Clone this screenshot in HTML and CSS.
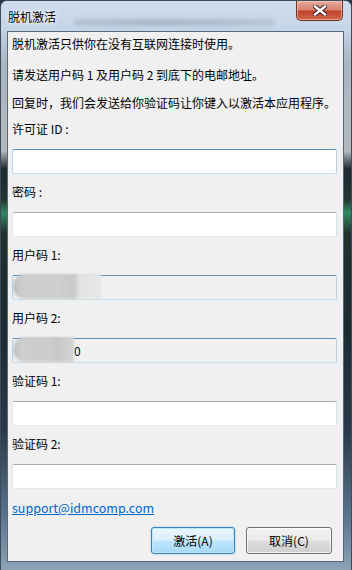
FILE: index.html
```html
<html>
<head>
<meta charset="utf-8">
<link rel="stylesheet" href="styles.css">
</head>
<body>

<div class="window">
	<!--start title bar-->
	<div class="titleBar">
		<span class="titleText">脱机激活</span>
		<span class="titleBlur"></span>
		<div class="closeBtn">
			<svg width="14" height="11" viewBox="0 0 14 11">
				<path d="M2 1.5 L12 9.5 M12 1.5 L2 9.5" stroke="#3b2320" stroke-width="4.4" stroke-linecap="square" fill="none"/>
				<path d="M2 1.5 L12 9.5 M12 1.5 L2 9.5" stroke="#ffffff" stroke-width="2.4" stroke-linecap="square" fill="none"/>
			</svg>
		</div>
	</div>
	<!--end title bar-->

	<div class="client">
		<p class="line first">脱机激活只供你在没有互联网连接时使用。</p>
		<p class="line second">请发送用户码 1 及用户码 2 到底下的电邮地址。</p>
		<p class="line third">回复时，我们会发送给你验证码让你键入以激活本应用程序。</p>

		<div class="label">许可证 ID :</div>
		<input class="box boxBlue" type="text">

		<div class="label">密码 :</div>
		<input class="box" type="password">

		<div class="label">用户码 1:</div>
		<div class="box boxBlue readOnly">
			<span class="blob blobLong"></span>
		</div>

		<div class="label">用户码 2:</div>
		<div class="box boxBlue readOnly">
			<span class="blob blobShort"></span><span class="tail">0</span>
		</div>

		<div class="label">验证码 1:</div>
		<input class="box" type="text">

		<div class="label">验证码 2:</div>
		<input class="box" type="text">

		<a class="mail" href="#">support@idmcomp.com</a>

		<div class="buttons">
			<button class="btn btnDefault">激活(A)</button>
			<button class="btn">取消(C)</button>
		</div>
	</div>
</div>

</body>
</html>
```

FILE: styles.css
```css
html, body {
	margin: 0;
	padding: 0;
	background-color: #2b3640;
	font-family: "Noto Sans CJK SC", "Noto Sans", sans-serif;
	font-size: 12px;
	color: #000;
}

.window {
	width: 352px;
	height: 570px;
	box-sizing: border-box;
	border-radius: 7px 7px 0 0;
	border: 1px solid #3e4c59;
	border-bottom: none;
	background: linear-gradient(to bottom,
		#c6d6e8 0, #c3d3e4 30px, #aab6c2 60px, #b3b8bc 150px,
		#1f2a31 168px, #24332f 198px, #2f8a5f 212px, #22302d 232px,
		#1e2a31 330px, #2a3a48 430px, #55708a 510px, #8ea3b8 570px);
	display: flex;
	flex-direction: column;
}

.titleBar {
	height: 30px;
	display: flex;
	align-items: flex-start;
	background: linear-gradient(to bottom, #cfdded, #c4d5e8);
	border-radius: 6px 6px 0 0;
}

.titleText {
	margin: 8px 0 0 7px;
	line-height: 16px;
	text-shadow: 0 0 6px #fff, 0 0 3px #fff;
}

.titleBlur {
	width: 200px;
	height: 5px;
	margin: 19px 0 0 18px;
	background: linear-gradient(to right, #a4b1bf, #8f9cab 40%, #97a4b3 70%, #aab6c3);
	filter: blur(2.5px);
	opacity: 0.75;
}

.closeBtn {
	margin-left: auto;
	margin-right: 8px;
	width: 47px;
	height: 20px;
	box-sizing: border-box;
	border: 1px solid #6a3128;
	border-top: none;
	border-radius: 0 0 5px 5px;
	background: linear-gradient(to bottom, #e6aa9c 0, #d8826f 45%, #c3442c 55%, #cd6648 100%);
	box-shadow: inset 0 0 0 1px rgba(255, 220, 210, 0.5);
	display: flex;
	align-items: center;
	justify-content: center;
}

.client {
	margin: 0 7px 8px 6px;
	flex: 1;
	background-color: #f0f0f0;
	border: 1px solid #56687a;
	padding: 2px 6px 0 4px;
	display: flex;
	flex-direction: column;
}

.line {
	margin: 0;
	line-height: 20px;
	white-space: nowrap;
}

.second {
	margin-top: 11px;
}

.third {
	margin-top: 8px;
}

.label {
	line-height: 20px;
	margin-top: 8px;
}

.third + .label {
	margin-top: 6px;
}

.box {
	display: block;
	height: 25px;
	box-sizing: border-box;
	margin: 10px 0 0 0;
	padding: 0 3px;
	width: 100%;
	background-color: #fff;
	border: 1px solid #e3e9ef;
	border-top-color: #abadb3;
	border-left-color: #e2e3ea;
	border-right-color: #dbdfe6;
	border-radius: 2px;
	font-family: inherit;
	font-size: 12px;
	outline: none;
}

.boxBlue {
	border-color: #b7d3ea;
	border-top-color: #5b8db9;
	border-bottom-color: #c6e0f2;
}

.readOnly {
	background-color: #f0f0f0;
	display: flex;
	align-items: center;
	padding: 0;
}

.blob {
	display: block;
	height: 25px;
	filter: blur(0.8px);
	border-radius: 12px 0 0 12px;
}

.blobLong {
	width: 88px;
	margin-top: -3px;
	background: linear-gradient(to right, #bdbdbd 0, #cdcdcd 10%, #cfd0d0 50%, #c8c9c9 70%, #e3e4e4 76%, #e6e7e7 100%);
}

.blobShort {
	width: 61px;
	margin-top: -3px;
	background: linear-gradient(to right, #c2c2c2 0, #cecece 15%, #cdcdcd 60%, #c7c7c7 75%, #d6d6d6 100%);
}

.tail {
	margin-left: 0;
	line-height: 20px;
}

.mail {
	margin-top: 9px;
	line-height: 20px;
	color: #0066cc;
	text-decoration: underline;
	font-size: 12.5px;
	align-self: flex-start;
}

.buttons {
	margin-top: 9px;
	display: flex;
	justify-content: flex-end;
	gap: 11px;
	padding-right: 5px;
}

.btn {
	width: 86px;
	height: 27px;
	box-sizing: border-box;
	border: 1px solid #707070;
	border-radius: 3px;
	background: linear-gradient(to bottom, #f2f2f2 0, #ebebeb 48%, #dddddd 52%, #cfcfcf 100%);
	box-shadow: inset 0 0 0 1px rgba(255, 255, 255, 0.7);
	font-family: inherit;
	font-size: 12px;
	color: #000;
	padding: 0;
}

.btnDefault {
	width: 84px;
	border-color: #3c7fb1;
	background: linear-gradient(to bottom, #eaf6fd 0, #d9f0fc 48%, #bee6fd 52%, #a7d9f5 100%);
	box-shadow: inset 0 0 0 1px #bfe7fc, 0 0 2px #7cc8f0;
}
```
